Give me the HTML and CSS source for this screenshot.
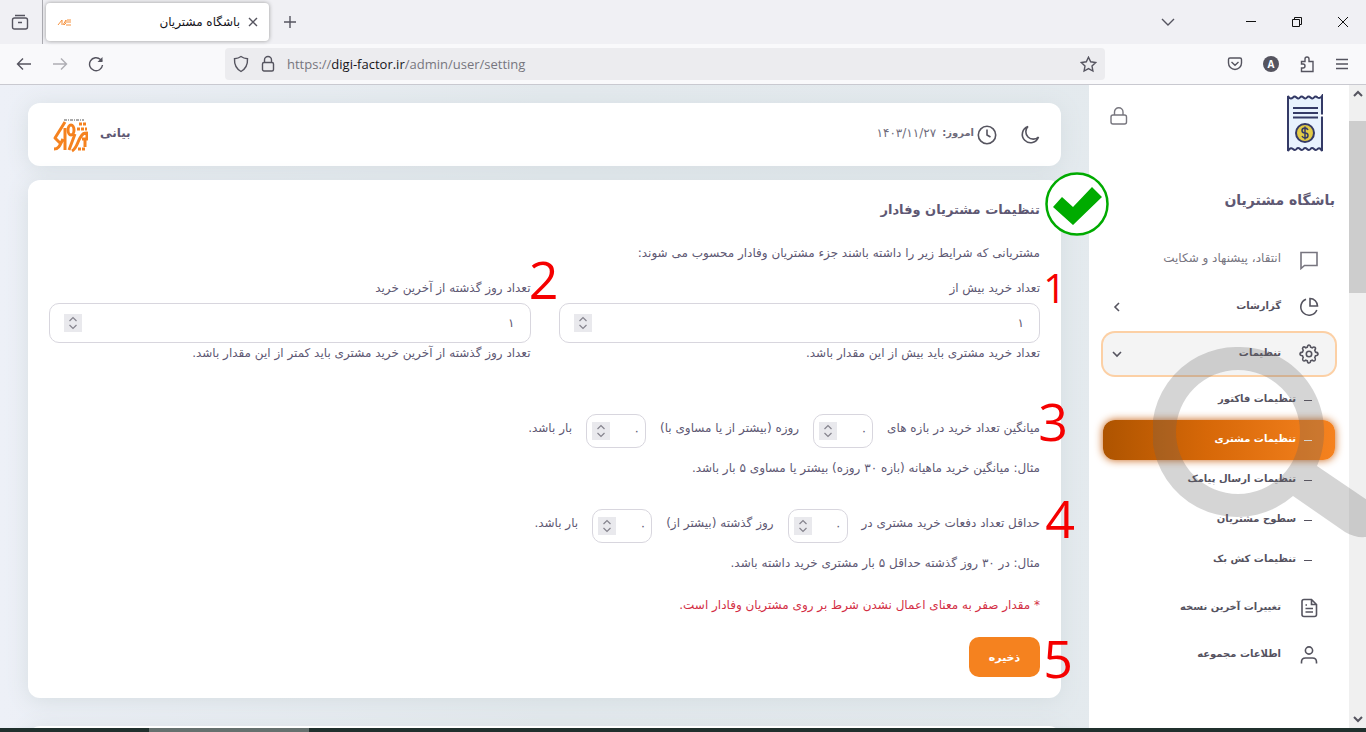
FILE: index.html
```html
<!DOCTYPE html>
<html lang="fa">
<head>
<meta charset="utf-8">
<meta name="viewport" content="width=device-width, initial-scale=1">
<title>باشگاه مشتریان</title>
<link rel="stylesheet" href="styles.css">
</head>
<body>
<svg class="defs" aria-hidden="true">
  <symbol id="brand" viewBox="0 0 36 36">
    <g fill="none" stroke="#f5821f" stroke-width="3" stroke-linejoin="round">
      <path d="M13 5L3 21l6 6M2 32c5 0 6-4 9-10M13 11v22"/>
      <path d="M17 33l6-16"/><ellipse cx="19" cy="13" rx="3" ry="5"/>
      <path d="M20 34c5-3 5-8 8-13s4-5 7-5v6h-5M33 22v8"/>
      <path d="M25 12h10M27 7h8" stroke-dasharray="3 1"/>
      <path d="M26 32h8" stroke-dasharray="3 1"/>
    </g>
    <path d="M12 3h20" fill="none" stroke="#aaa" stroke-width="2" stroke-dasharray="3 1 1 1"/>
  </symbol>
  <symbol id="spin" viewBox="0 0 18 18"><path d="M5.500 7L9 3.500 12.500 7M5.500 11L9 14.500l3.500-3.500" fill="none" stroke="#85838d" stroke-width="1.200"/></symbol>
</svg>

<header class="browser">
  <div class="tabs">
    <button class="ib view" aria-label="نمای برگه‌ها"><svg width="18" height="18" viewBox="0 0 18 18"><path d="M4 2.500h10M3.500 5h11q2 0 2 2v7q0 2-2 2h-11q-2 0-2-2V7q0-2 2-2zM7 9.500h4"/></svg></button>
    <div class="tab" dir="rtl">
      <button class="ib" aria-label="بستن"><svg width="10" height="10" viewBox="0 0 10 10"><path d="M1 1l8 8M9 1L1 9"/></svg></button>
      <span class="tabtitle">باشگاه مشتریان</span>
      <svg class="fav" width="15" height="9" viewBox="0 0 15 9"><path d="M1 7l4-5v5M6 7l3-5v3l-2 2M10 2h4M10 4h4M9 7h5" fill="none" stroke="#f5923f"/></svg>
    </div>
    <button class="ib plus" aria-label="برگه جدید"><svg width="14" height="14" viewBox="0 0 14 14"><path d="M7 1v12M1 7h12"/></svg></button>
    <div class="win">
      <button class="ib" aria-label="فهرست برگه‌ها"><svg width="14" height="10" viewBox="0 0 14 10"><path d="M1 2l6 6 6-6"/></svg></button>
      <button class="ib first" aria-label="کمینه"><svg width="12" height="12" viewBox="0 0 12 12"><path d="M1 5.500h10"/></svg></button>
      <button class="ib" aria-label="بازگردانی"><svg width="12" height="12" viewBox="0 0 12 12"><path d="M1.500 3.500h7v7h-7zM3.500 3V1.500h7v7H9"/></svg></button>
      <button class="ib" aria-label="بستن پنجره"><svg width="12" height="12" viewBox="0 0 12 12"><path d="M1 1l10 10M11 1L1 11"/></svg></button>
    </div>
  </div>
  <div class="toolbar">
    <div class="nav">
      <button class="ib" aria-label="عقب"><svg width="16" height="14" viewBox="0 0 16 14"><path d="M15 7H1.500M7 1.500L1.500 7 7 12.500"/></svg></button>
      <button class="ib dim" aria-label="جلو"><svg width="16" height="14" viewBox="0 0 16 14"><path d="M1 7h13.500M9 1.500L14.500 7 9 12.500"/></svg></button>
      <button class="ib" aria-label="تازه‌سازی"><svg width="16" height="16" viewBox="0 0 16 16"><path d="M14.500 9A6.500 6.500 0 1 1 12.500 3.500L14 5"/><path d="M14.500 1v5h-5z" fill="#55545f" stroke="none"/></svg></button>
    </div>
    <div class="url">
      <svg width="16" height="18" viewBox="0 0 16 18"><path d="M8 1.500c2 1.500 4 2 6.500 2.200C14.800 9 13 13.500 8 16.500 3 13.500 1.200 9 1.500 3.700 4 3.500 6 3 8 1.500z"/></svg>
      <svg width="14" height="18" viewBox="0 0 14 18"><rect x="1.500" y="7.500" width="11" height="8.500" rx="1.500"/><path d="M3.500 7.500V5a3.500 3.500 0 0 1 7 0v2.500"/></svg>
      <span class="address">https://<b>digi-factor.ir</b>/admin/user/setting</span>
      <svg width="17" height="17" viewBox="0 0 17 17"><path d="M8.500 1.200l2.200 4.600 5 .7-3.700 3.500.9 5-4.400-2.400L4.100 15l.9-5L1.300 6.500l5-.7z"/></svg>
    </div>
    <div class="ext">
      <button class="ib" aria-label="Pocket"><svg width="16" height="16" viewBox="0 0 16 16"><path d="M3 2h10q1.500 0 1.500 1.500V7a6.500 6.500 0 0 1-13 0V3.500Q1.500 2 3 2zM4.500 6L8 9.200 11.500 6"/></svg></button>
      <button class="account" aria-label="حساب">A</button>
      <button class="ib" aria-label="افزونه‌ها"><svg width="16" height="18" viewBox="0 0 16 18"><path d="M2.500 6.500H6V4a2 2 0 0 1 4 0v2.500h4v10H2.500V13H4a2 2 0 0 0 0-4H2.500z"/></svg></button>
      <button class="ib" aria-label="منو"><svg width="14" height="12" viewBox="0 0 14 12"><path d="M1 1.500h12M1 6h12M1 10.500h12"/></svg></button>
    </div>
  </div>
</header>

<div class="app" dir="rtl">
  <div class="scroll" aria-hidden="true">
    <svg width="10" height="8" viewBox="0 0 10 8"><path d="M1 6l4-4 4 4"/></svg>
    <div class="thumb"></div>
    <svg width="10" height="8" viewBox="0 0 10 8"><path d="M1 2l4 4 4-4"/></svg>
  </div>

  <aside class="side">
    <div class="sidehead">
      <svg width="38" height="60" viewBox="0 0 38 60" fill="none" stroke="#343a66" stroke-width="2">
        <path d="M2 2q2 4 5 1.500 1.500-2 3.500 0t3.500 0 3.500 0 3.500 0 3.500 0 3.500 0 3.500 0Q34 5 36 2v55q-2-4-4.500-2-1.500 2-3.500 0t-3.500 0-3.500 0-3.500 0-3.500 0-3.500 0-3.500 0Q4 53 2 57z" fill="#e8f2fd"/>
        <path d="M7 14h25M7 19h25M7 23.500h25"/><path d="M34 21.500h4" stroke="#fff"/>
        <circle cx="19" cy="39" r="9" fill="#e3cb46"/>
        <path d="M22 36q-1-2-3-2-3 0-3 2.500t3 2.500 3 2.500-3 2.500q-2 0-3-2M19 32.500v13" stroke-width="1.500"/>
      </svg>
      <button class="ib" aria-label="قفل منو"><svg width="20" height="20" viewBox="0 0 20 20"><rect x="2" y="9" width="15.500" height="9" rx="2"/><path d="M5.500 9V6a4.200 4.200 0 0 1 8.500 0v3"/></svg></button>
    </div>
    <h1 class="sitetitle">باشگاه مشتریان</h1>
    <nav class="menu">
      <a class="item soft" href="#"><svg width="20" height="20" viewBox="0 0 20 20"><path d="M2 2.500h16v13H5.500L2 18.500z"/></svg><span>انتقاد، پیشنهاد و شکایت</span></a>
      <a class="item" href="#"><svg width="20" height="20" viewBox="0 0 20 20"><path d="M7 2.200A8.300 8.300 0 1 0 17.800 13M11 1.500V9h7.500A7.500 7.500 0 0 0 11 1.500z"/></svg><span>گزارشات</span><svg class="arrow" width="12" height="12" viewBox="0 0 12 12"><path d="M8 2L4 6l4 4"/></svg></a>
      <a class="item open" href="#"><svg width="20" height="20" viewBox="0 0 20 20"><circle cx="10" cy="10" r="2.700"/><path d="M8.300 3.200Q8.600 1 10 1t1.700 2.200l1.500.6q1.700-1.400 2.800-.4t-.2 2.900l.7 1.800q2.500.3 2.500 1.900t-2.500 1.800l-.7 1.800q1.300 1.800.2 2.900t-2.800-.3l-1.500.6Q11.400 19 10 19t-1.700-2.200l-1.500-.6q-1.700 1.400-2.800.3t.2-2.900l-.7-1.800Q1 11.600 1 10t2.500-1.900l.7-1.800Q2.900 4.500 4 3.400t2.800.4z"/></svg><span>تنظیمات</span><svg class="arrow" width="12" height="12" viewBox="0 0 12 12"><path d="M2 4l4 4 4-4"/></svg></a>
      <div class="sub">
        <a class="subitem" href="#"><span>تنظیمات فاکتور</span></a>
        <a class="subitem current" href="#"><span>تنظیمات مشتری</span></a>
        <a class="subitem" href="#"><span>تنظیمات ارسال پیامک</span></a>
        <a class="subitem" href="#"><span>سطوح مشتریان</span></a>
        <a class="subitem" href="#"><span>تنظیمات کش بک</span></a>
      </div>
      <a class="item" href="#"><svg width="20" height="20" viewBox="0 0 20 20"><path d="M12.500 1.500H5q-2 0-2 2v13q0 2 2 2h10.500q2 0 2-2v-10zM12.500 1.500v5h5M6.500 7H8M6.500 10.500h7.500M6.500 14h7.500"/></svg><span>تغییرات آخرین نسخه</span></a>
      <a class="item" href="#"><svg width="20" height="20" viewBox="0 0 20 20"><circle cx="10" cy="5.500" r="3.600"/><path d="M2.500 18.500V17q0-4 4-4h7q4 0 4 4v1.500"/></svg><span>اطلاعات مجموعه</span></a>
    </nav>
  </aside>

  <main class="main">
    <section class="topbar">
      <button class="ib" aria-label="حالت شب"><svg width="20" height="20" viewBox="0 0 20 20"><path d="M8 1.500A8.300 8.300 0 1 0 18.500 12 7.300 7.300 0 0 1 8 1.500z"/></svg></button>
      <div class="today"><svg width="20" height="20" viewBox="0 0 20 20"><circle cx="10" cy="10" r="8.700"/><path d="M10 4.500V10l3.500 2"/></svg><strong>امروز:</strong><span>۱۴۰۳/۱۱/۲۷</span></div>
      <div class="user"><strong>بیانی</strong><svg width="36" height="36"><use href="#brand"/></svg></div>
    </section>

    <form class="card">
      <div class="titlerow">
        <h2>تنظیمات مشتریان وفادار</h2>
        <svg class="mark check" width="64" height="64" viewBox="0 0 64 64"><circle cx="32" cy="32" r="30.500" fill="#fff" stroke="#00ab00" stroke-width="2.500"/><path d="M8 35l9-10 11 10 19-20 10 10-29 28z" fill="#00ab00"/></svg>
      </div>
      <p class="intro">مشتریانی که شرایط زیر را داشته باشند جزء مشتریان وفادار محسوب می شوند:</p>
      <div class="cols">
        <div class="field">
          <label for="f1">تعداد خرید بیش از</label>
          <div class="num wide"><input id="f1" type="text" inputmode="numeric" value="۱"><button type="button" aria-label="تغییر مقدار"><svg width="18" height="18"><use href="#spin"/></svg></button></div>
          <p class="help">تعداد خرید مشتری باید بیش از این مقدار باشد.</p>
          <span class="mark one">1</span>
        </div>
        <div class="field">
          <label for="f2">تعداد روز گذشته از آخرین خرید</label>
          <div class="num wide"><input id="f2" type="text" inputmode="numeric" value="۱"><button type="button" aria-label="تغییر مقدار"><svg width="18" height="18"><use href="#spin"/></svg></button></div>
          <p class="help">تعداد روز گذشته از آخرین خرید مشتری باید کمتر از این مقدار باشد.</p>
          <span class="mark two">2</span>
        </div>
      </div>
      <div class="line">
        <label for="f3">میانگین تعداد خرید در بازه های</label>
        <div class="num"><input id="f3" type="text" inputmode="numeric" value="۰"><button type="button" aria-label="تغییر مقدار"><svg width="18" height="18"><use href="#spin"/></svg></button></div>
        <label for="f4">روزه (بیشتر از یا مساوی با)</label>
        <div class="num"><input id="f4" type="text" inputmode="numeric" value="۰"><button type="button" aria-label="تغییر مقدار"><svg width="18" height="18"><use href="#spin"/></svg></button></div>
        <span>بار باشد.</span>
        <span class="mark three">3</span>
      </div>
      <p class="example">مثال: میانگین خرید ماهیانه (بازه ۳۰ روزه) بیشتر یا مساوی ۵ بار باشد.</p>
      <div class="line">
        <label for="f5">حداقل تعداد دفعات خرید مشتری در</label>
        <div class="num"><input id="f5" type="text" inputmode="numeric" value="۰"><button type="button" aria-label="تغییر مقدار"><svg width="18" height="18"><use href="#spin"/></svg></button></div>
        <label for="f6">روز گذشته (بیشتر از)</label>
        <div class="num"><input id="f6" type="text" inputmode="numeric" value="۰"><button type="button" aria-label="تغییر مقدار"><svg width="18" height="18"><use href="#spin"/></svg></button></div>
        <span>بار باشد.</span>
        <span class="mark four">4</span>
      </div>
      <p class="example">مثال: در ۳۰ روز گذشته حداقل ۵ بار مشتری خرید داشته باشد.</p>
      <p class="warn">* مقدار صفر به معنای اعمال نشدن شرط بر روی مشتریان وفادار است.</p>
      <div class="actions"><button class="save" type="submit">ذخیره</button><span class="mark five">5</span></div>
    </form>
    <section class="card next"></section>
  </main>

  <svg class="lens" width="214" height="194" viewBox="0 0 214 194"><path fill-rule="evenodd" d="M85 0a85 85 0 0 1 79 119l50 34v37c-8 1-15-1-22-5l-52-36A85 85 0 1 1 85 0zM85 23a62 62 0 1 0 0 124 62 62 0 0 0 0-124z"/></svg>
</div>
<footer class="desk"><span></span></footer>
</body>
</html>
```

FILE: styles.css
```css
* { box-sizing: border-box; }
body {
  margin: 0;
  height: 100vh;
  display: flex;
  flex-direction: column;
  overflow: hidden;
  font-family: "DejaVu Sans", sans-serif;
  font-size: 12px;
  color: #5e5873;
}
h1, h2, p { margin: 0; }
button, input { font: inherit; color: inherit; }
a { color: inherit; text-decoration: none; }
svg { display: block; flex: none; }
.defs { position: absolute; width: 0; height: 0; }
.ib { border: 0; padding: 0; background: none; display: flex; }
.ib svg, .url svg, .scroll svg, .item svg, .today svg { fill: none; stroke: #55545f; stroke-width: 1.4; }

/* browser frame */
.browser { flex: none; border-bottom: 1px solid #c9c9d0; }
.tabs { height: 44px; background: #f0f0f4; display: flex; align-items: center; }
.view { width: 43px; height: 44px; padding: 0 0 0 11px; align-items: center; border-right: 1px solid #aaaab0; }
.tab {
  width: 223px; height: 38px; margin-left: 3px; padding: 0 11px;
  display: flex; align-items: center; gap: 8px;
  background: #fff; border-radius: 4px; box-shadow: 0 0 4px #999;
}
.tabtitle { flex: 1; color: #15141a; }
.plus { margin-left: 14px; }
.win { margin-left: auto; display: flex; align-items: center; gap: 34px; padding-right: 17px; }
.win .ib:not(:first-child) svg { stroke: #111; stroke-width: 1; }
.first { margin-left: 36px; }
.toolbar { height: 40px; background: #f9f9fb; display: flex; align-items: center; }
.nav { width: 225px; display: flex; align-items: center; gap: 20px; padding-left: 16px; }
.dim { opacity: .45; }
.url {
  flex: 1; height: 32px; padding: 0 8px; display: flex; align-items: center; gap: 12px;
  background: #ececef; border-radius: 4px;
}
.address { flex: 1; font: 13px "Open Sans", sans-serif; color: #77767e; }
.address b { font-weight: 400; color: #15141a; }
.ext { width: 261px; display: flex; align-items: center; justify-content: flex-end; gap: 20px; padding-right: 17px; }
.account {
  width: 16px; height: 16px; padding: 0; border: 0; border-radius: 50%;
  background: #55545f; color: #fff; font: bold 10px/16px "Open Sans", sans-serif;
}

/* page */
.app {
  position: relative; flex: 1; min-height: 0; display: flex; overflow: hidden;
  background: linear-gradient(90deg, #edf0f7, #e3e9ed 40%, #e4eaee 90%, #eaf0f4);
}
.scroll { width: 17px; background: #f0f0f0; display: flex; flex-direction: column; align-items: center; padding: 5px 0; }
.scroll svg { stroke-width: 2; }
.thumb { width: 17px; height: 172px; margin: 23px 0 auto; background: #cdcdcd; }
.side { width: 260px; background: #fff; padding: 9px 14px; }
.sidehead { display: flex; justify-content: space-between; padding: 0 11px 0 6px; }
.sidehead .ib { margin-top: 12px; height: 20px; }
.sidehead .ib svg { stroke: #77767e; }
.sitetitle { margin-top: 31px; font-size: 14px; line-height: 30px; }
.menu { margin-top: 24px; display: flex; flex-direction: column; gap: 5px; font-size: 10px; font-weight: bold; color: #55525f; }
.menu span { padding-bottom: 4px; }
.item { height: 42px; display: flex; align-items: center; gap: 18px; padding: 0 16px 0 8px; border-radius: 12px; }
.item svg { stroke-width: 1.6; }
.item.soft { font-size: 12px; font-weight: 400; color: #77757f; }
.item.soft svg { stroke: #77757f; }
.item .arrow { margin-right: auto; }
.item.open { background: #f4f4f4; box-shadow: 0 0 0 2px #fcd0a5; }
.sub { padding-bottom: 2px; }
.subitem { height: 40px; display: flex; align-items: center; gap: 8px; padding-right: 23px; border-radius: 12px; }
.subitem::before { content: ""; width: 8px; height: 1px; background: currentColor; }
.subitem.current {
  color: #fff;
  background: linear-gradient(90deg, #ae5400, #d76808 45%, #f5821f);
  box-shadow: 0 0 8px #c86010;
}
.main { flex: 1; min-width: 0; padding: 18px 28px 0; }
.topbar, .card { background: #fff; border-radius: 12px; box-shadow: 0 3px 22px #d5dde1; }
.topbar { height: 63px; padding: 0 21px 0 24px; display: flex; align-items: center; gap: 23px; }
.topbar svg { stroke-width: 1.6; }
.today { display: flex; align-items: center; gap: 3px; color: #6e6b7b; }
.today strong { font-size: 10px; }
.today span { margin-right: 3px; }
.user { margin-right: auto; display: flex; align-items: center; gap: 12px; }
.user strong, .today strong, .today span { padding-bottom: 4px; }
.card { margin-top: 14px; padding: 18px 21px 21px; position: relative; }
.titlerow, .field, .line, .actions { position: relative; }
h2 { font-size: 13px; line-height: 24px; }
.intro { margin-top: 19px; line-height: 24px; }
.cols { margin-top: 12px; display: grid; grid-template-columns: 1fr 1fr; gap: 28px; }
.field label { display: block; line-height: 22px; margin-bottom: 4px; }
.help, .example, .warn { line-height: 20px; }
.num {
  width: 60px; height: 34px; display: flex; align-items: center; padding: 0 5px;
  border: 1px solid #d8d6de; border-radius: 10px; background: #fff;
}
.num input { flex: 1; min-width: 0; width: 0; border: 0; padding: 0; background: none; outline: 0; }
.num button { width: 18px; height: 18px; padding: 0; border: 0; background: #e9e9ed; }
.num.wide { width: 100%; height: 40px; padding: 0 15px 0 14px; }
.line { margin-top: 51px; display: flex; align-items: center; gap: 14px; white-space: nowrap; }
.line label, .line > span { padding-bottom: 6px; }
.example { margin-top: 10px; }
.example + .line { margin-top: 31px; }
.warn { margin-top: 22px; color: #d32f45; }
.actions { margin-top: 22px; }
.save {
  display: block; width: 71px; height: 40px; border: 0; border-radius: 10px;
  background: #f5821f; color: #fff; font-size: 11px; font-weight: bold;
}
.next { height: 120px; margin-top: 28px; }

/* tutorial marks lying over the page */
.mark { position: absolute; font: 52px/52px "Open Sans", sans-serif; color: #f50000; z-index: 2; }
.line > .mark { padding: 0; }
.check { right: -69px; top: -26px; }
.one { font-size: 40px; right: -26px; top: -15px; }
.two { right: -28px; top: -24px; }
.three { right: -28px; top: -19px; }
.four { right: -35px; top: -17px; }
.five { right: -33px; top: -5px; }
.lens { position: absolute; right: -1px; top: 262px; fill: #646464; fill-opacity: .27; z-index: 3; pointer-events: none; }

.desk { flex: none; height: 4px; background: #20302d; padding: 0 149px; }
.desk span { display: block; width: 160px; height: 4px; background: #66716f; }
```
